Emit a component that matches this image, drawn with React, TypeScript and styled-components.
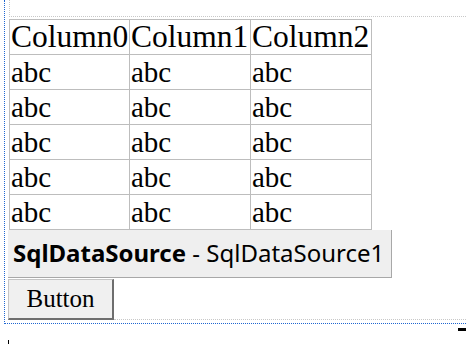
import React from 'react';
import styled, { createGlobalStyle } from 'styled-components';

const GlobalStyle = createGlobalStyle`
  html, body {
    margin: 0;
    padding: 0;
    background: #ffffff;
    overflow: hidden;
  }
`;

const Page = styled.div`
  width: 466px;
  height: 344px;
  overflow: hidden;
`;

const Surface = styled.div`
  margin-left: 4px;
  padding: 0 0 3px 3px;
  border-left: 1px dotted #1f66d1;
  border-bottom: 1px dotted #1f66d1;
`;

const TopBlock = styled.div`
  margin-left: 1px;
  height: 16px;
  border-left: 1px dotted #c8c8c8;
  border-bottom: 1px dotted #c8c8c8;
  margin-bottom: 2px;
`;

const Grid = styled.table`
  margin-left: 1px;
  border-collapse: collapse;
  table-layout: fixed;
  border: 1px solid #bdbdbd;
  font-family: "Liberation Serif", "Times New Roman", serif;
  color: #000;
`;

const HeadCell = styled.th`
  border: 1px solid #bdbdbd;
  height: 34px;
  padding: 0 0 0 1px;
  text-align: left;
  font-weight: normal;
  font-size: 31.5px;
  line-height: 34px;
  white-space: nowrap;
  overflow: hidden;
`;

const Cell = styled.td`
  border: 1px solid #bdbdbd;
  height: 34px;
  padding: 0 0 0 1px;
  font-size: 29px;
  line-height: 34px;
  vertical-align: bottom;
`;

const SourceLabel = styled.div`
  display: inline-block;
  box-sizing: border-box;
  height: 48px;
  padding: 0 7px 0 5px;
  background: #efefef;
  border-right: 1px solid #a8a8a8;
  border-bottom: 1px solid #a8a8a8;
  font-family: "Noto Sans", "Open Sans", sans-serif;
  font-size: 24px;
  line-height: 46px;
  color: #000;
  white-space: nowrap;
`;

const ButtonRow = styled.div`
  display: flex;
  align-items: flex-end;
  margin-top: 1px;
`;

const Filler = styled.div`
  flex: 1;
  border-bottom: 1px dotted #c8c8c8;
`;

const PlainButton = styled.button`
  box-sizing: border-box;
  width: 106px;
  height: 41px;
  margin: 0;
  padding: 0;
  background: #f0f0f0;
  border-style: solid;
  border-width: 1px 2px 2px 1px;
  border-color: #c4c4c4 #6e6e6e #6e6e6e #c4c4c4;
  font-family: "Liberation Serif", "Times New Roman", serif;
  font-size: 25px;
  color: #000;
`;

const Footer = styled.div`
  display: flex;
  justify-content: space-between;
  align-items: flex-start;
  height: 21px;
`;

const Caret = styled.span`
  margin: 16px 0 0 8px;
  width: 1px;
  height: 6px;
  background: #000;
`;

const Mark = styled.span`
  margin-top: 4px;
  width: 8px;
  height: 3px;
  background: #000;
`;

const columns = ['Column0', 'Column1', 'Column2'];
const rows = [0, 1, 2, 3, 4];

const App: React.FC = () => {
  return (
    <Page>
      <GlobalStyle />
      <Surface>
        <TopBlock />
        <Grid>
          <colgroup>
            <col style={{ width: 120 }} />
            <col style={{ width: 121 }} />
            <col style={{ width: 121 }} />
          </colgroup>
          <thead>
            <tr>
              {columns.map(c => (
                <HeadCell key={c}>{c}</HeadCell>
              ))}
            </tr>
          </thead>
          <tbody>
            {rows.map(r => (
              <tr key={r}>
                {columns.map(c => (
                  <Cell key={c}>abc</Cell>
                ))}
              </tr>
            ))}
          </tbody>
        </Grid>
        <SourceLabel>
          <b>SqlDataSource</b> - SqlDataSource1
        </SourceLabel>
        <ButtonRow>
          <PlainButton>Button</PlainButton>
          <Filler />
        </ButtonRow>
      </Surface>
      <Footer>
        <Caret />
        <Mark />
      </Footer>
    </Page>
  );
};

export default App;
